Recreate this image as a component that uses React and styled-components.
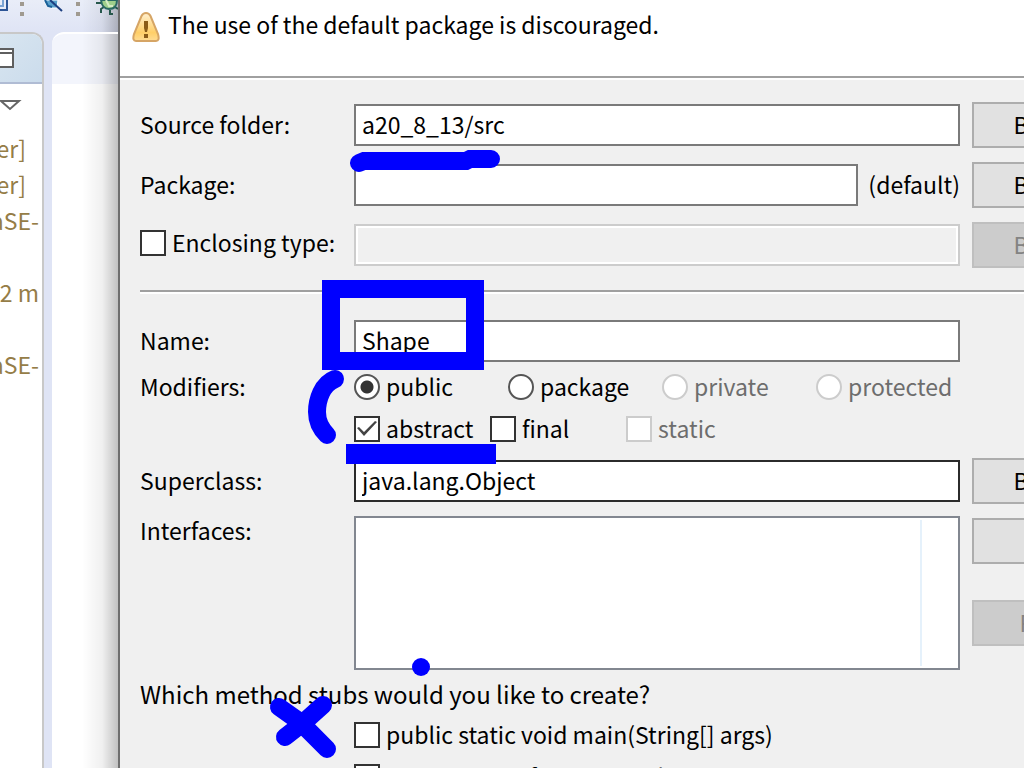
import React from 'react';
import styled, { createGlobalStyle, css } from 'styled-components';

const GlobalStyle = createGlobalStyle`
  * { box-sizing: border-box; }
  html, body, #root { height: 100%; }
  body {
    margin: 0;
    overflow: hidden;
    font-family: "Noto Sans CJK KR", "Noto Sans", sans-serif;
    font-size: 23px;
    line-height: 32px;
    color: #000;
    background: #f0f0f0;
  }
  input, button { font: inherit; color: inherit; margin: 0; }
`;

const Screen = styled.div`
  position: relative;
  display: flex;
  height: 100vh;
  overflow: hidden;
`;

const Workbench = styled.div`
  flex: 0 0 118px;
  display: flex;
  flex-direction: column;
  overflow: hidden;
  background: #dfe4f5;
`;

const shade = 'linear-gradient(to right, rgba(0, 0, 0, 0) calc(100% - 36px), rgba(0, 0, 0, 0.06) calc(100% - 16px), rgba(0, 0, 0, 0.24))';

const Toolbar = styled.div`
  height: 32px;
  background: ${shade}, linear-gradient(#e9edf8, #dfe4f5);
  svg { display: block; }
`;

const Panes = styled.div`
  flex: 1;
  display: flex;
  gap: 8px;
`;

const Explorer = styled.section`
  width: 44px;
  overflow: hidden;
  border: solid #c8c8c8;
  border-width: 2px 2px 0 0;
  border-top-right-radius: 12px;
  background: #fff;
`;

const ExplorerTab = styled.header`
  height: 50px;
  border-bottom: 2px solid #b0bcd4;
  background: linear-gradient(135deg, #d8e5f0, #cbdcec);
  svg { display: block; }
`;

const ViewMenu = styled.div`
  height: 48px;
  svg { display: block; }
`;

const Tree = styled.ul`
  margin: 0;
  padding: 0;
  list-style: none;
`;

const TreeRow = styled.li`
  display: flex;
  justify-content: flex-end;
  height: 36px;
  padding-right: ${(p) => (p.$short ? 16 : 3)}px;
  white-space: pre;
  color: #957d47;
`;

const Editor = styled.section`
  flex: 1;
  border-top: 2px solid #fff;
  border-top-left-radius: 12px;
  background: ${shade}, linear-gradient(#f3f5fc 50px, #fff 50px);
`;

const Dialog = styled.main`
  flex: 1;
  min-width: 0;
  overflow: hidden;
  border-left: 2px solid #6f6f6f;
  background: #f0f0f0;
`;

const Banner = styled.header`
  display: flex;
  gap: 8px;
  height: 80px;
  padding: 8px 12px;
  background: #fff;
  border-bottom: 2px solid #fff;
  box-shadow: inset 0 -2px #a0a0a0;
  svg { flex: none; margin-top: 2px; }
`;

const Message = styled.p`
  margin: 0;
  white-space: nowrap;
`;

const Form = styled.form`
  display: flex;
  flex-direction: column;
  padding: 22px 0 0 20px;
`;

const Row = styled.div`
  display: grid;
  grid-template-columns: 202px minmax(0, 1fr) 52px;
  column-gap: 12px;
  align-items: ${(p) => (p.$top ? 'start' : 'center')};
  line-height: ${(p) => (p.$top ? 28 : 32)}px;
  min-height: ${(p) => p.$height || 46}px;
  margin-bottom: ${(p) => p.$after || 0}px;
  white-space: nowrap;
`;

const Caption = styled.span`
  padding-bottom: 2px;
`;

const FieldGroup = styled.div`
  display: flex;
  align-items: center;
  gap: 10px;
`;

const TextField = styled.input`
  flex: 1;
  width: 100%;
  min-width: 0;
  height: 42px;
  padding: 0 6px 2px;
  border: 2px solid ${(p) => (p.$focused ? '#2b2b2b' : '#7a7a7a')};
  border-radius: 0;
  background: #fff;
  outline: none;
  &:disabled {
    border-color: #ccc;
    background: #f0f0f0;
    box-shadow: inset 0 0 0 2px #fff;
  }
`;

const PushButton = styled.button`
  width: 182px;
  height: 46px;
  padding: 0 0 2px;
  border: 2px solid #adadad;
  border-radius: 0;
  background: #e1e1e1;
  &:disabled {
    border-color: #bfbfbf;
    background: #ccc;
    color: #838383;
  }
`;

const ButtonStack = styled.div`
  display: flex;
  flex-direction: column;
  gap: 36px;
  padding-top: 2px;
`;

const Separator = styled.hr`
  width: calc(100% + 12px);
  height: 4px;
  margin: 22px 0 26px;
  border: 0;
  border-top: 2px solid #a0a0a0;
  background: #fff;
`;

const Options = styled.div`
  display: grid;
  grid-template-columns: repeat(4, ${(p) => p.$pitch}px);
`;

const Choice = styled.label`
  display: flex;
  align-items: center;
  gap: 6px;
  color: ${(p) => (p.$disabled ? '#6d6d6d' : '#000')};
`;

const LabelChoice = styled(Choice)`
  padding-bottom: 4px;
`;

const mark = css`
  appearance: none;
  flex: none;
  width: 26px;
  height: 26px;
  border: 2px solid #333;
  background: #fff;
  &:disabled { border-color: #ccc; }
`;

const Tick = styled.input.attrs({ type: 'checkbox' })`
  ${mark}
  display: grid;
  &:checked::before {
    content: '';
    background: #444;
    clip-path: polygon(1px 10px, 3px 9px, 8px 14px, 19px 3px, 21px 4px, 8px 18px);
  }
`;

const Radio = styled.input.attrs({ type: 'radio' })`
  ${mark}
  border-radius: 50%;
  border-color: #555;
  &:checked { background: radial-gradient(circle, #333 6px, #fff 7px); }
`;

const InterfaceList = styled.div`
  height: 154px;
  padding: 2px 36px 2px 0;
  border: 2px solid #828790;
  background: #fff;
`;

const ListColumn = styled.div`
  height: 100%;
  border-right: 2px solid #e5f1fb;
`;

const Question = styled.p`
  margin: 8px 0 4px;
  font-size: 24px;
  white-space: nowrap;
`;

const Ink = styled.svg`
  position: absolute;
  top: 0;
  left: 0;
  pointer-events: none;
`;

const WarningIcon = () => (
  <svg width="28" height="32" viewBox="0 0 28 32" aria-hidden="true">
    <defs>
      <linearGradient id="warn" x1="0" y1="0" x2="0" y2="1">
        <stop offset="0" stopColor="#fff0d0" />
        <stop offset="0.7" stopColor="#ffcf68" />
        <stop offset="1" stopColor="#ffdc94" />
      </linearGradient>
    </defs>
    <path d="M14 3 Q17 3 18.500 6 L26 24 Q28 31 24 31 H4 Q0 31 2 24 L9.500 6 Q11 3 14 3Z" fill="url(#warn)" stroke="#d6a565" strokeWidth="2" />
    <path d="M12 11 H16 V18 L15 22 H13 L12 18Z M12 24 H16 V28 H12Z" fill="#8a5c18" />
  </svg>
);

const ToolbarIcons = () => (
  <svg width="118" height="32" viewBox="0 0 118 32" aria-hidden="true">
    <path d="M0 10 H7 V0" fill="none" stroke="#2d5596" strokeWidth="2" />
    <path d="M0 6 H3 V0" fill="none" stroke="#7aa3d4" strokeWidth="2" />
    <path d="M20 2h4v4h-4zM20 12h4v4h-4zM76 2h4v4h-4zM76 12h4v4h-4z" fill="#a09a90" />
    <path d="M44 0 L46 5 L51 8 H57 L58 0Z" fill="#58a0cc" stroke="#fff" strokeWidth="1" />
    <path d="M45 0 L48 6 L52 7" fill="none" stroke="#1c6098" strokeWidth="2" />
    <path d="M50 0 L62 11" stroke="#1d3f80" strokeWidth="2" />
    <path d="M96 3 H102 M104 7 L101 9 V13 M110 10 V14 H113 M115 7 L118 9" fill="none" stroke="#27584c" strokeWidth="2" />
    <path d="M101 0 Q102 9 109 9 Q117 9 117 0Z" fill="#9fcf8b" stroke="#2b6964" strokeWidth="2" />
    <path d="M106 0 L109 6 H113" fill="none" stroke="#d5ebc4" strokeWidth="2" />
  </svg>
);

const Annotations = () => (
  <Ink width="1024" height="768" viewBox="0 0 1024 768" aria-hidden="true">
    <g fill="none" stroke="#00f" strokeWidth="18" strokeLinecap="round">
      <path d="M359 163 L364 161 H466 L470 159 H491" />
      <rect x="331" y="289" width="144" height="72" />
      <path d="M335 379 C322 384 317 400 317 412 C317 422 321 429 327 435" />
      <path d="M279 707 L300 722 L327 749" />
      <path d="M323 705 L303 723 L285 737" strokeLinejoin="round" />
    </g>
    <path d="M346 444 H496 V464 H346Z" fill="#00f" />
    <circle cx="421" cy="667" r="9" fill="#00f" />
  </Ink>
);

const treeRows = ['er]', 'er]', 'aSE-', '', '2 m', '', 'aSE-'];
const access = ['public', 'package', 'private', 'protected'];
const flags = ['abstract', 'final', 'static'];

export default function App() {
  return (
    <Screen>
      <GlobalStyle />
      <Workbench>
        <Toolbar><ToolbarIcons /></Toolbar>
        <Panes>
          <Explorer>
            <ExplorerTab>
              <svg width="42" height="48" aria-hidden="true">
                <path d="M-4 15 H13 V33 H-4 M0 19 H13" fill="#fff" stroke="#5f5f5f" strokeWidth="2" />
              </svg>
            </ExplorerTab>
            <ViewMenu>
              <svg width="42" height="48" aria-hidden="true">
                <path d="M1 17 H19 L10 25 Z" fill="#fff" stroke="#666" strokeWidth="2" />
              </svg>
            </ViewMenu>
            <Tree>
              {treeRows.map((text, i) => (
                <TreeRow key={i} $short={text === 'er]'}>{text}</TreeRow>
              ))}
            </Tree>
          </Explorer>
          <Editor />
        </Panes>
      </Workbench>
      <Dialog>
        <Banner>
          <WarningIcon />
          <Message>The use of the default package is discouraged.</Message>
        </Banner>
        <Form onSubmit={(e) => e.preventDefault()}>
          <Row $after={14}>
            <Caption as="label" htmlFor="source">Source folder:</Caption>
            <TextField id="source" defaultValue="a20_8_13/src" />
            <PushButton type="button">Browse...</PushButton>
          </Row>
          <Row $after={14}>
            <Caption as="label" htmlFor="package">Package:</Caption>
            <FieldGroup>
              <TextField id="package" />
              <Caption>(default)</Caption>
            </FieldGroup>
            <PushButton type="button">Browse...</PushButton>
          </Row>
          <Row>
            <LabelChoice><Tick /><Caption>Enclosing type:</Caption></LabelChoice>
            <TextField aria-label="Enclosing type" disabled />
            <PushButton type="button" disabled>Browse...</PushButton>
          </Row>
          <Separator />
          <Row $height={42} $after={4}>
            <Caption as="label" htmlFor="name">Name:</Caption>
            <TextField id="name" defaultValue="Shape" />
          </Row>
          <Row $height={42}>
            <Caption>Modifiers:</Caption>
            <Options $pitch={154}>
              {access.map((name, i) => (
                <Choice key={name} $disabled={i > 1}>
                  <Radio name="access" defaultChecked={i === 0} disabled={i > 1} />
                  <Caption>{name}</Caption>
                </Choice>
              ))}
            </Options>
          </Row>
          <Row $height={42} $after={8}>
            <span />
            <Options $pitch={136}>
              {flags.map((name, i) => (
                <Choice key={name} $disabled={i === 2}>
                  <Tick defaultChecked={i === 0} disabled={i === 2} />
                  <Caption>{name}</Caption>
                </Choice>
              ))}
            </Options>
          </Row>
          <Row $after={12}>
            <Caption as="label" htmlFor="superclass">Superclass:</Caption>
            <TextField id="superclass" defaultValue="java.lang.Object" $focused />
            <PushButton type="button">Browse...</PushButton>
          </Row>
          <Row $top>
            <Caption>Interfaces:</Caption>
            <InterfaceList><ListColumn /></InterfaceList>
            <ButtonStack>
              <PushButton type="button">Add...</PushButton>
              <PushButton type="button" disabled>Remove</PushButton>
            </ButtonStack>
          </Row>
          <Question>Which method stubs would you like to create?</Question>
          <Row $height={42}>
            <span />
            <Choice><Tick /><Caption>public static void main(String[] args)</Caption></Choice>
          </Row>
          <Row $height={42}>
            <span />
            <Choice><Tick /><Caption>Constructors from superclass</Caption></Choice>
          </Row>
        </Form>
      </Dialog>
      <Annotations />
    </Screen>
  );
}
